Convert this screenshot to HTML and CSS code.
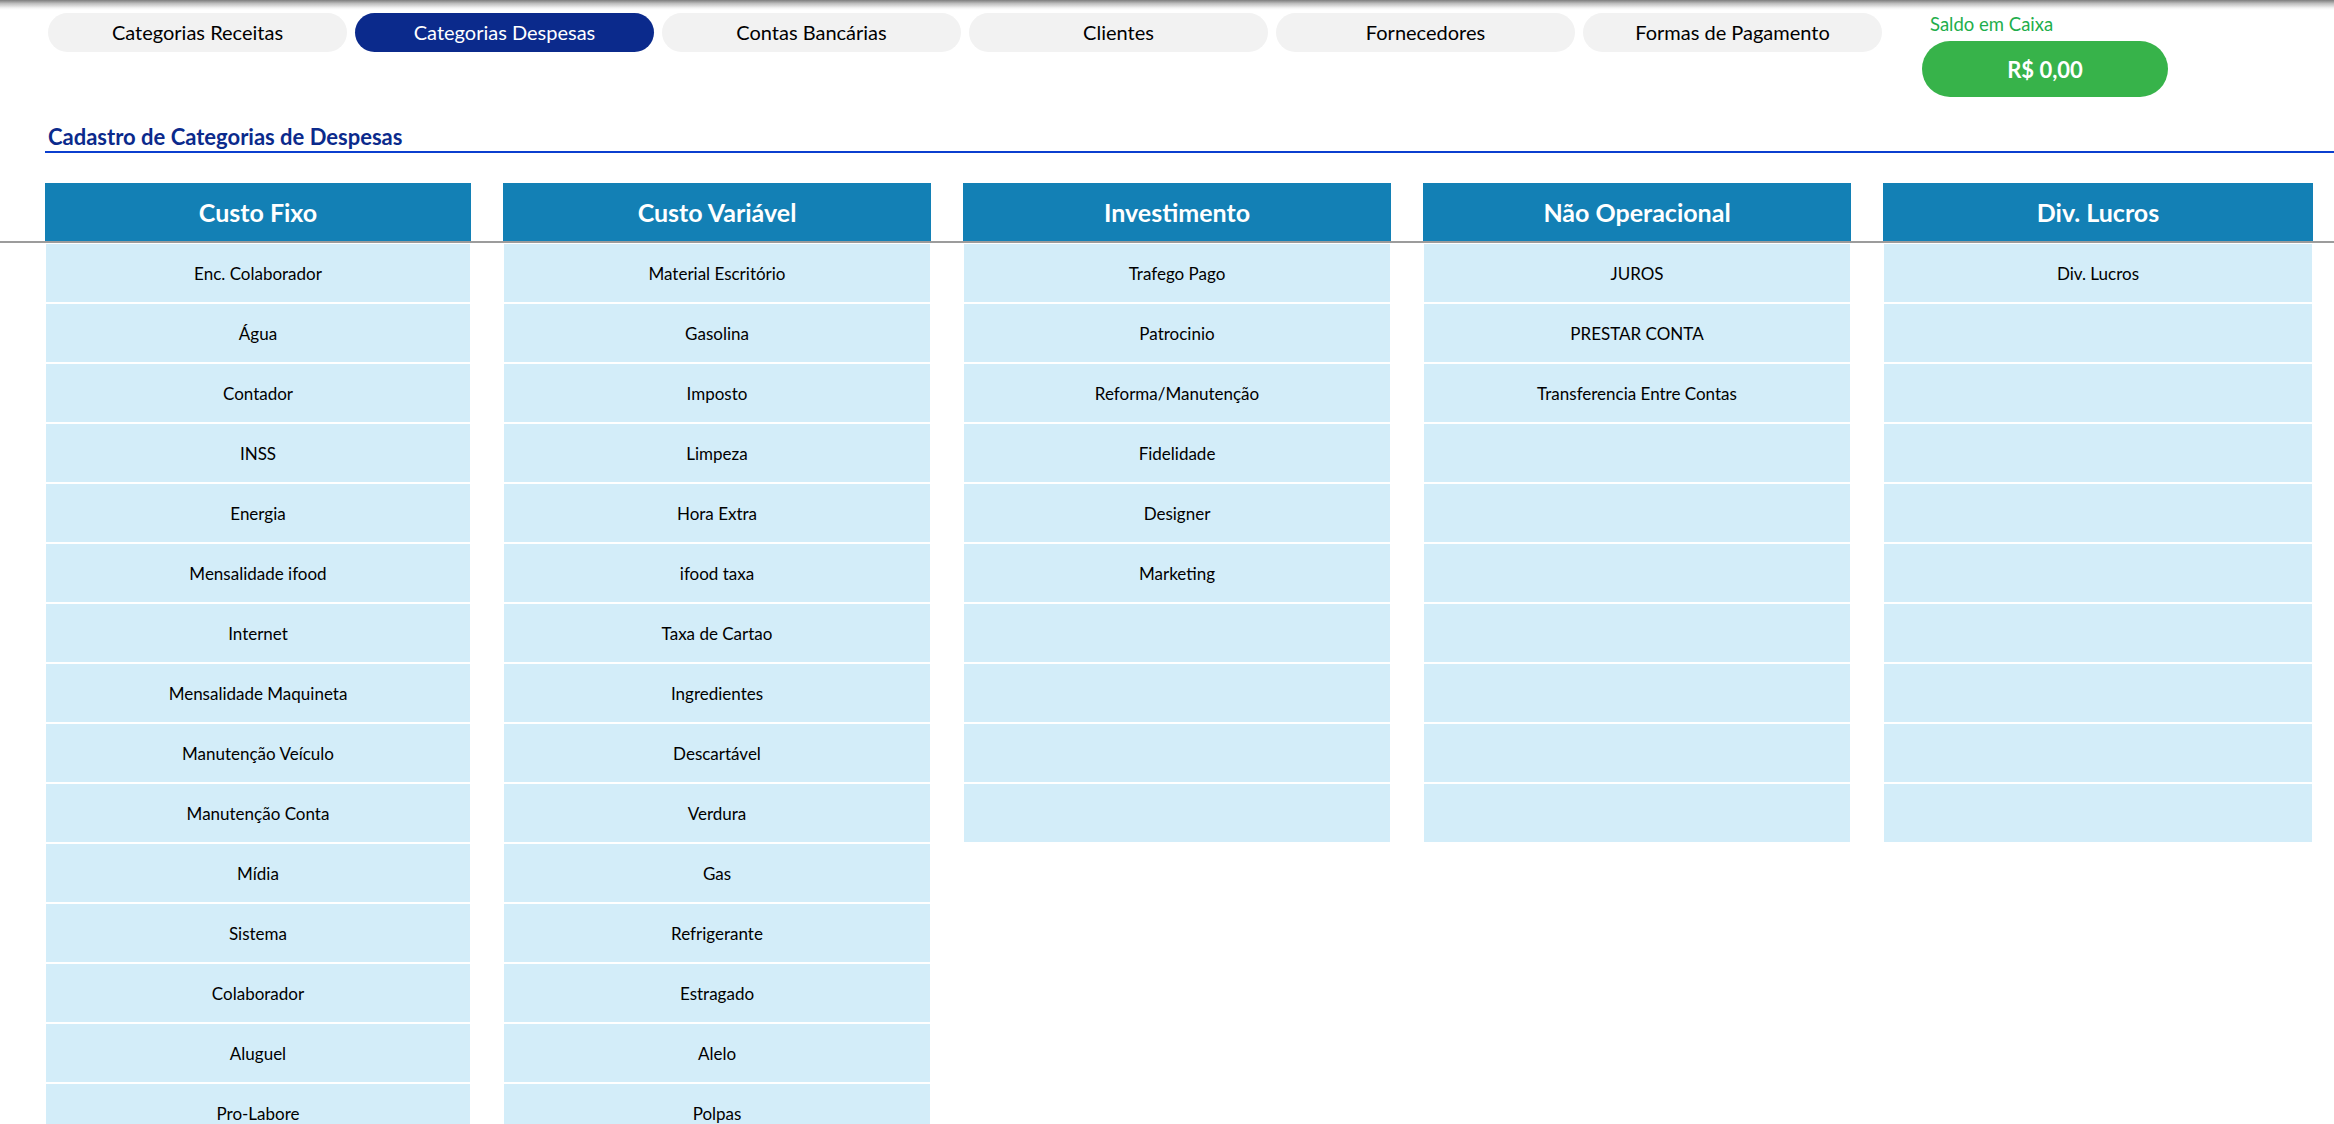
FILE: index.html
```html
<!DOCTYPE html>
<html lang="pt-BR">
<head>
<meta charset="utf-8">
<title>Cadastro de Categorias de Despesas</title>
<link rel="stylesheet" href="styles.css">
</head>
<body>
<div class="topshade"></div>
<header class="topbar">
  <nav class="tabs">
    <a class="tab">Categorias Receitas</a>
    <a class="tab active">Categorias Despesas</a>
    <a class="tab">Contas Bancárias</a>
    <a class="tab">Clientes</a>
    <a class="tab">Fornecedores</a>
    <a class="tab">Formas de Pagamento</a>
  </nav>
  <div class="saldo">
    <div class="saldo-label">Saldo em Caixa</div>
    <div class="saldo-value">R$ 0,00</div>
  </div>
</header>

<h1 class="title">Cadastro de Categorias de Despesas</h1>

<div class="thead">
  <div class="th">Custo Fixo</div>
  <div class="th">Custo Variável</div>
  <div class="th">Investimento</div>
  <div class="th">Não Operacional</div>
  <div class="th">Div. Lucros</div>
</div>

<div class="tbody">
  <div class="col">
    <div class="cell">Enc. Colaborador</div>
    <div class="cell">Água</div>
    <div class="cell">Contador</div>
    <div class="cell">INSS</div>
    <div class="cell">Energia</div>
    <div class="cell">Mensalidade ifood</div>
    <div class="cell">Internet</div>
    <div class="cell">Mensalidade Maquineta</div>
    <div class="cell">Manutenção Veículo</div>
    <div class="cell">Manutenção Conta</div>
    <div class="cell">Mídia</div>
    <div class="cell">Sistema</div>
    <div class="cell">Colaborador</div>
    <div class="cell">Aluguel</div>
    <div class="cell">Pro-Labore</div>
  </div>
  <div class="col">
    <div class="cell">Material Escritório</div>
    <div class="cell">Gasolina</div>
    <div class="cell">Imposto</div>
    <div class="cell">Limpeza</div>
    <div class="cell">Hora Extra</div>
    <div class="cell">ifood taxa</div>
    <div class="cell">Taxa de Cartao</div>
    <div class="cell">Ingredientes</div>
    <div class="cell">Descartável</div>
    <div class="cell">Verdura</div>
    <div class="cell">Gas</div>
    <div class="cell">Refrigerante</div>
    <div class="cell">Estragado</div>
    <div class="cell">Alelo</div>
    <div class="cell">Polpas</div>
  </div>
  <div class="col">
    <div class="cell">Trafego Pago</div>
    <div class="cell">Patrocinio</div>
    <div class="cell">Reforma/Manutenção</div>
    <div class="cell">Fidelidade</div>
    <div class="cell">Designer</div>
    <div class="cell">Marketing</div>
    <div class="cell"></div>
    <div class="cell"></div>
    <div class="cell"></div>
    <div class="cell"></div>
  </div>
  <div class="col">
    <div class="cell">JUROS</div>
    <div class="cell">PRESTAR CONTA</div>
    <div class="cell">Transferencia Entre Contas</div>
    <div class="cell"></div>
    <div class="cell"></div>
    <div class="cell"></div>
    <div class="cell"></div>
    <div class="cell"></div>
    <div class="cell"></div>
    <div class="cell"></div>
  </div>
  <div class="col">
    <div class="cell">Div. Lucros</div>
    <div class="cell"></div>
    <div class="cell"></div>
    <div class="cell"></div>
    <div class="cell"></div>
    <div class="cell"></div>
    <div class="cell"></div>
    <div class="cell"></div>
    <div class="cell"></div>
    <div class="cell"></div>
  </div>
</div>
</body>
</html>
```

FILE: styles.css
```css
* { box-sizing: border-box; }

html, body {
  margin: 0;
  padding: 0;
  background: #ffffff;
}

body {
  font-family: Lato, "Open Sans", "Liberation Sans", sans-serif;
  color: #000;
}

.topshade {
  height: 10px;
  background: linear-gradient(#7d7d7d 0%, #bdbdbd 35%, #f4f4f4 80%, #ffffff 100%);
}

.topbar {
  display: flex;
  align-items: flex-start;
  padding: 3px 0 0 48px;
  height: 100px;
}

.tabs {
  display: flex;
  gap: 8px;
}

.tab {
  width: 299px;
  height: 39px;
  padding-bottom: 1px;
  border-radius: 20px;
  background: #f2f2f2;
  display: flex;
  align-items: center;
  justify-content: center;
  font-size: 20px;
  color: #000;
  text-decoration: none;
}

.tab.active {
  background: #0b2a8c;
  color: #ffffff;
}

.saldo {
  margin-left: 40px;
  display: flex;
  flex-direction: column;
  align-items: flex-start;
}

.saldo-label {
  font-size: 18.5px;
  color: #1fae4c;
  line-height: 22px;
  margin: 0 0 0 8px;
}

.saldo-value {
  margin-top: 6px;
  width: 246px;
  height: 56px;
  border-radius: 28px;
  background: #37b34a;
  color: #ffffff;
  font-weight: 700;
  font-size: 22px;
  display: flex;
  align-items: center;
  justify-content: center;
}

.title {
  margin: 14px 0 0 45px;
  padding: 0 0 2px 3px;
  font-size: 22px;
  line-height: 25px;
  font-weight: 700;
  color: #0b2a8c;
  border-bottom: 2px solid #0b3fcf;
}

.thead {
  margin-top: 30px;
  display: grid;
  grid-template-columns: 426px 428px 428px 428px 430px;
  column-gap: 32px;
  padding-left: 45px;
  border-bottom: 2px solid #9c9c9c;
}

.th {
  height: 58px;
  background: #1380b5;
  color: #ffffff;
  font-weight: 700;
  font-size: 25px;
  display: flex;
  align-items: center;
  justify-content: center;
}

.tbody {
  display: grid;
  grid-template-columns: 426px 428px 428px 428px 430px;
  column-gap: 32px;
  padding-left: 45px;
  padding-top: 1px;
  align-items: start;
}

.col {
  display: flex;
  flex-direction: column;
  gap: 2px;
}

.cell {
  height: 58px;
  margin: 0 1px;
  background: #d3edf9;
  display: flex;
  align-items: center;
  justify-content: center;
  font-size: 17px;
  color: #000;
}
```
